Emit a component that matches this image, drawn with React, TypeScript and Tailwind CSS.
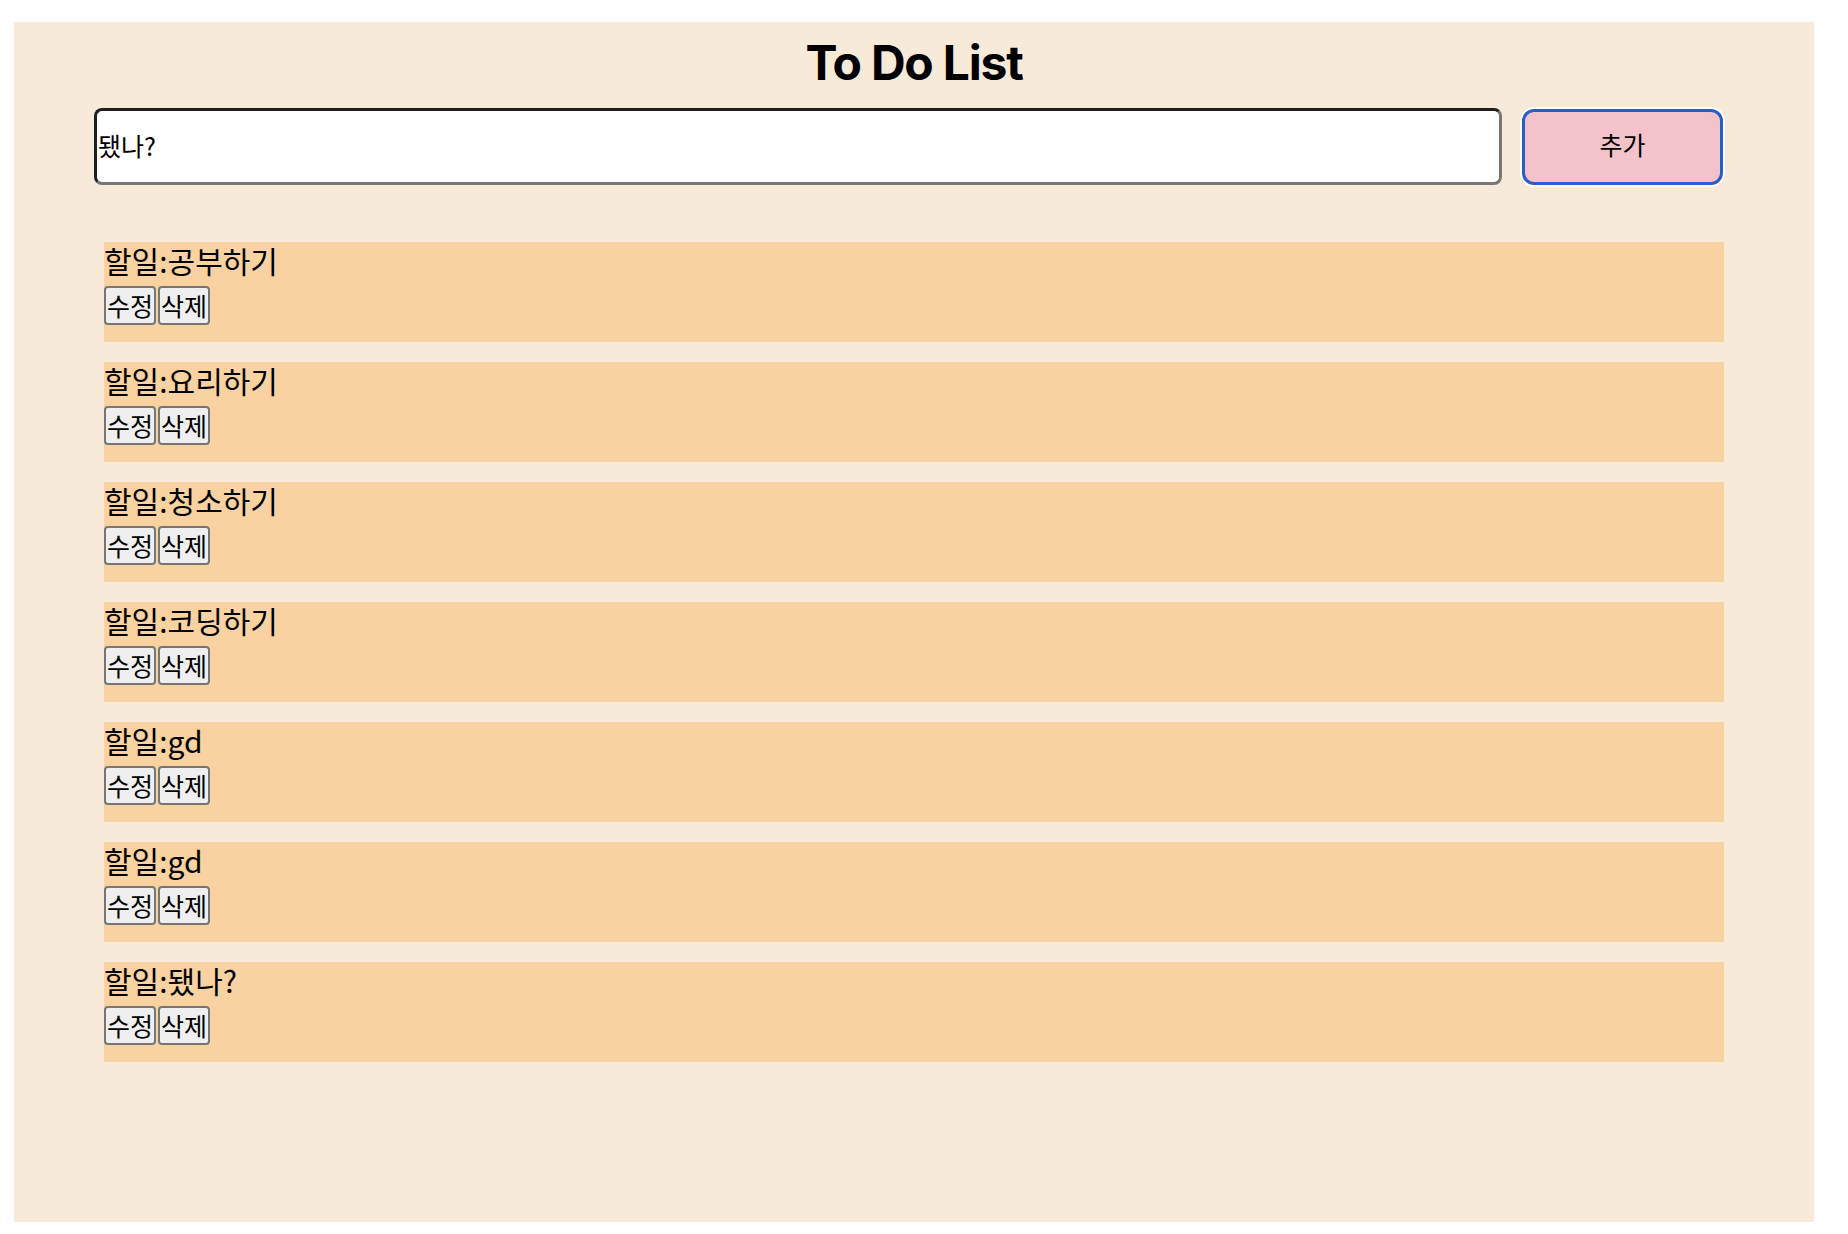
import { useState } from 'react';

const KR = "font-['Noto_Sans_CJK_KR',sans-serif]";

const INITIAL = ['공부하기', '요리하기', '청소하기', '코딩하기', 'gd', 'gd', '됐나?'];

function TodoItem({ text }: { text: string }) {
  return (
    <li className="w-[1620px] h-[100px] bg-[#f8d2a0]">
      <div className="text-[30px] leading-[36px] text-black">할일:{text}</div>
      <div className="mt-[8px] flex gap-[2px]">
        <button
          type="button"
          className="h-[39px] px-[1px] text-[25px] leading-none text-black bg-[#efefef] border-2 border-[#767676] rounded-[4px]"
        >
          수정
        </button>
        <button
          type="button"
          className="h-[39px] px-[1px] text-[25px] leading-none text-black bg-[#efefef] border-2 border-[#767676] rounded-[4px]"
        >
          삭제
        </button>
      </div>
    </li>
  );
}

export default function App() {
  const [todos] = useState(INITIAL);
  const [input, setInput] = useState('됐나?');

  return (
    <div className={`pl-[14px] pt-[22px] ${KR}`}>
      <div className="w-[1800px] h-[1200px] bg-[#f7ead9] flex flex-col">
        {/* Title */}
        <h1 className="h-[86px] pb-[5px] flex items-center justify-center font-['Inter',sans-serif] font-bold text-[48px] tracking-[-0.025em] text-black">
          To Do List
        </h1>

        {/* Input row */}
        <div className="flex items-center gap-[20px] pl-[80px]">
          <input
            value={input}
            onChange={(e) => setInput(e.target.value)}
            className="w-[1408px] h-[77px] px-[1px] pb-[3px] text-[25px] text-black bg-white border-[3px] border-t-[#1f1f1f] border-l-[#1f1f1f] border-b-[#777777] border-r-[#777777] rounded-[8px] outline-none"
          />
          <button
            type="button"
            className="w-[201px] h-[76px] pb-[3px] text-[25px] text-black bg-[#f4c2c9] border-[3px] border-[#2b5fc8] rounded-[12px] shadow-[0_0_0_2px_#ffffff]"
          >
            추가
          </button>
        </div>

        {/* List */}
        <ul className="mt-[57px] pl-[90px] flex flex-col gap-[20px]">
          {todos.map((t, i) => (
            <TodoItem key={i} text={t} />
          ))}
        </ul>
      </div>
    </div>
  );
}
